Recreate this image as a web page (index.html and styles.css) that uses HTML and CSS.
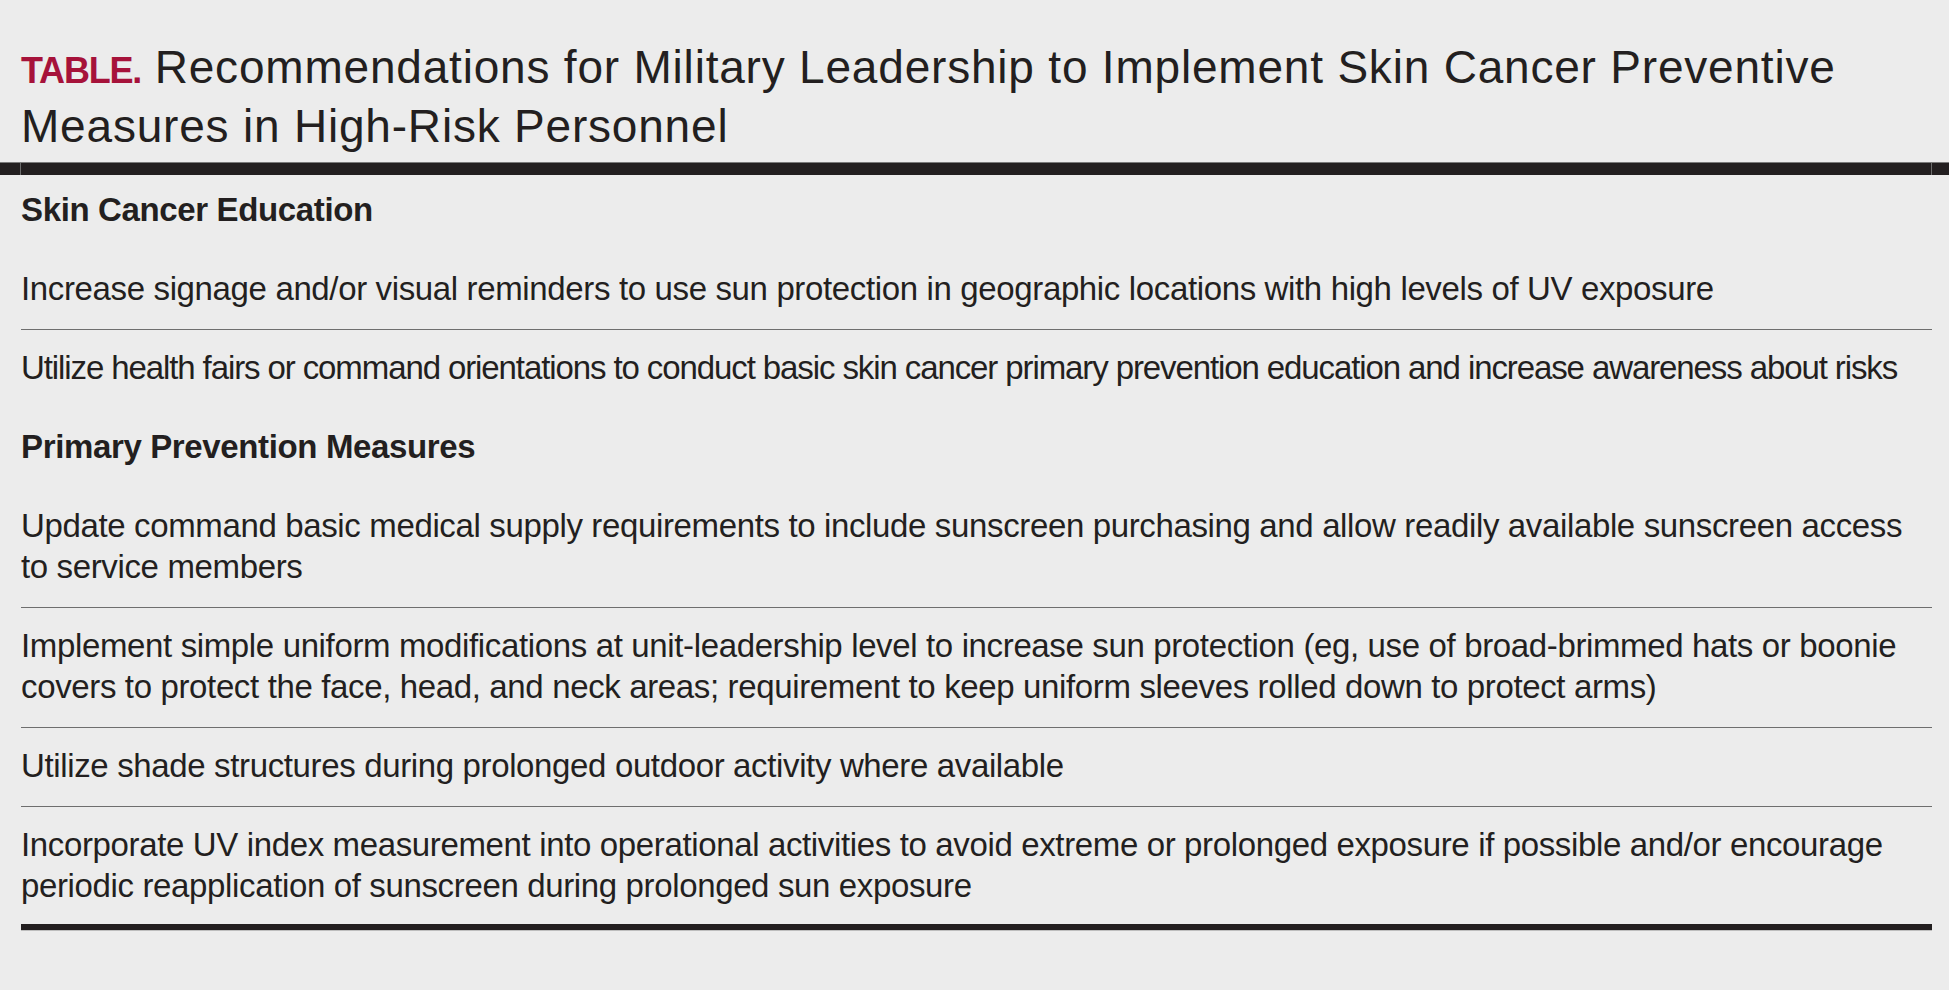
FILE: index.html
```html
<!DOCTYPE html>
<html lang="en">
<head>
<meta charset="utf-8">
<title>Table</title>
<link rel="stylesheet" href="styles.css">
</head>
<body>
<div class="page">
  <h1 class="title"><span class="label">TABLE.</span> Recommendations for Military Leadership to Implement Skin Cancer Preventive Measures in High-Risk Personnel</h1>
  <div class="top-rule"><div class="seg seg-l"></div><div class="seg seg-m"></div><div class="seg seg-r"></div></div>
  <div class="table">
    <div class="row head first">Skin Cancer Education</div>
    <div class="row item">Increase signage and/or visual reminders to use sun protection in geographic locations with high levels of UV exposure</div>
    <div class="row item last tight">Utilize health fairs or command orientations to conduct basic skin cancer primary prevention education and increase awareness about risks</div>
    <div class="row head">Primary Prevention Measures</div>
    <div class="row item">Update command basic medical supply requirements to include sunscreen purchasing and allow readily available sunscreen access to service members</div>
    <div class="row item">Implement simple uniform modifications at unit-leadership level to increase sun protection (eg, use of broad-brimmed hats or boonie covers to protect the face, head, and neck areas; requirement to keep uniform sleeves rolled down to protect arms)</div>
    <div class="row item">Utilize shade structures during prolonged outdoor activity where available</div>
    <div class="row item last">Incorporate UV index measurement into operational activities to avoid extreme or prolonged exposure if possible and/or encourage periodic reapplication of sunscreen during prolonged sun exposure</div>
  </div>
  <div class="bottom-rule"></div>
</div>
</body>
</html>
```
FILE: styles.css
```css
html, body {
  margin: 0;
  padding: 0;
  background: #ececec;
}
.page {
  width: 1949px;
  min-height: 990px;
  background: #ececec;
  font-family: "Liberation Sans", Arial, sans-serif;
  color: #231f20;
}
.title {
  margin: 0 0 6px 0;
  padding: 38px 17px 0 21px;
  font-size: 46px;
  font-weight: 400;
  line-height: 59px;
  letter-spacing: 0.8px;
  color: #231f20;
}
.label {
  font-size: 36px;
  font-weight: 700;
  line-height: 36px;
  color: #a6123a;
  letter-spacing: -1.2px;
}
.top-rule {
  display: flex;
  gap: 1px;
  background: #6c6c6c;
  border-top: 1px solid #7a7a7a;
  height: 12px;
}
.seg {
  background: #231f20;
}
.seg-l { width: 20px; }
.seg-m { flex: 1; }
.seg-r { width: 17px; }
.table {
  margin: 0 17px 0 21px;
  font-size: 33px;
  line-height: 41px;
  letter-spacing: -0.36px;
}
.row {
  padding: 17px 0 20px 0;
}
.item {
  border-bottom: 1px solid #6e6e6e;
}
.item.last {
  border-bottom: none;
}
.tight {
  letter-spacing: -1.1px;
  white-space: nowrap;
}
.head {
  font-weight: 700;
  padding: 18px 0 21px 0;
}
.head.first {
  padding-top: 14px;
}
.bottom-rule {
  margin: -2px 17px 0 21px;
  height: 6px;
  background: #231f20;
  border-bottom: 1px solid #bdbdbd;
}
```
